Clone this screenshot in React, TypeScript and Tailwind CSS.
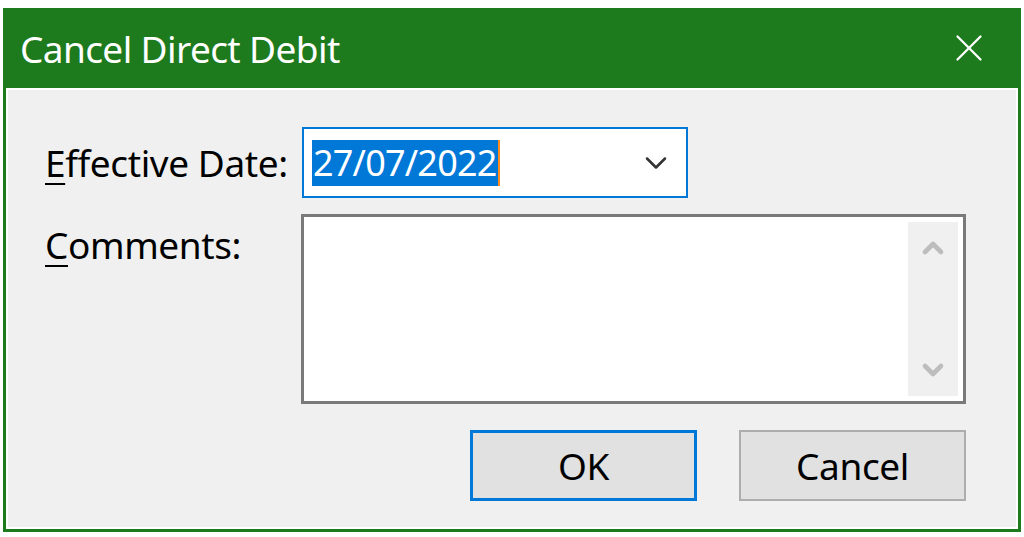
import { ChevronDown, ChevronUp, X } from 'lucide-react';

const font = { fontFamily: '"Noto Sans", "Open Sans", "Liberation Sans", sans-serif' };

export default function App() {
  return (
    <div className="h-[537px] w-[1024px] bg-white px-[3px] pt-[8px]" style={font}>
      <div className="flex h-[524px] flex-col border-[3px] border-t-0 border-[#1d7a1d] bg-[#1d7a1d]">
        {/* title bar */}
        <div className="flex h-[80px] shrink-0 items-center justify-between pl-[14px] pr-[26px]">
          <span className="text-[37px] leading-none tracking-[-0.6px] text-white">Cancel Direct Debit</span>
          <X className="h-[46px] w-[46px] text-white" strokeWidth={1.2} />
        </div>

        {/* body */}
        <div className="flex-1 border-2 border-white bg-[#f0f0f0] pl-[37px] pr-[50px] pt-[37px] text-black">
          <div className="flex items-center">
            <label className="w-[257px] text-[37px] leading-none tracking-[-0.4px]">
              <span className="underline decoration-2 underline-offset-[6px]">E</span>ffective Date:
            </label>
            <div className="flex h-[71px] w-[386px] items-center justify-between border-2 border-[#0078d7] bg-white pl-[8px] pr-[12px]">
              <div className="flex h-[46px] items-center">
                <span className="flex h-full items-center bg-[#0078d7] px-[1px] text-[36px] leading-none tracking-[-0.8px] text-white">
                  27/07/2022
                </span>
                <span className="h-full w-[2px] bg-[#ff8a1f]" />
              </div>
              <ChevronDown className="h-[36px] w-[36px] text-[#333]" strokeWidth={1.7} />
            </div>
          </div>

          <div className="mt-[16px] flex items-start">
            <label className="mt-[12px] w-[257px] text-[37px] leading-none tracking-[-0.4px]">
              <span className="underline decoration-2 underline-offset-[6px]">C</span>omments:
            </label>
            <div className="flex h-[190px] w-[667px] justify-end border-[3px] border-[#7a7a7a] bg-white p-[5px]">
              <div className="flex w-[50px] flex-col items-center justify-between bg-[#f0f0f0] py-[10px]">
                <ChevronUp className="h-[32px] w-[32px] text-[#bdbdbd]" strokeWidth={3.5} />
                <ChevronDown className="h-[32px] w-[32px] text-[#bdbdbd]" strokeWidth={3.5} />
              </div>
            </div>
          </div>

          <div className="mt-[26px] flex justify-end gap-[42px]">
            <button className="h-[71px] w-[227px] border-[3px] border-[#0078d7] bg-[#e1e1e1] text-[37px] leading-none tracking-[-0.4px]">
              OK
            </button>
            <button className="h-[71px] w-[227px] border-2 border-[#adadad] bg-[#e1e1e1] text-[37px] leading-none tracking-[-0.4px]">
              Cancel
            </button>
          </div>
        </div>
      </div>
    </div>
  );
}
